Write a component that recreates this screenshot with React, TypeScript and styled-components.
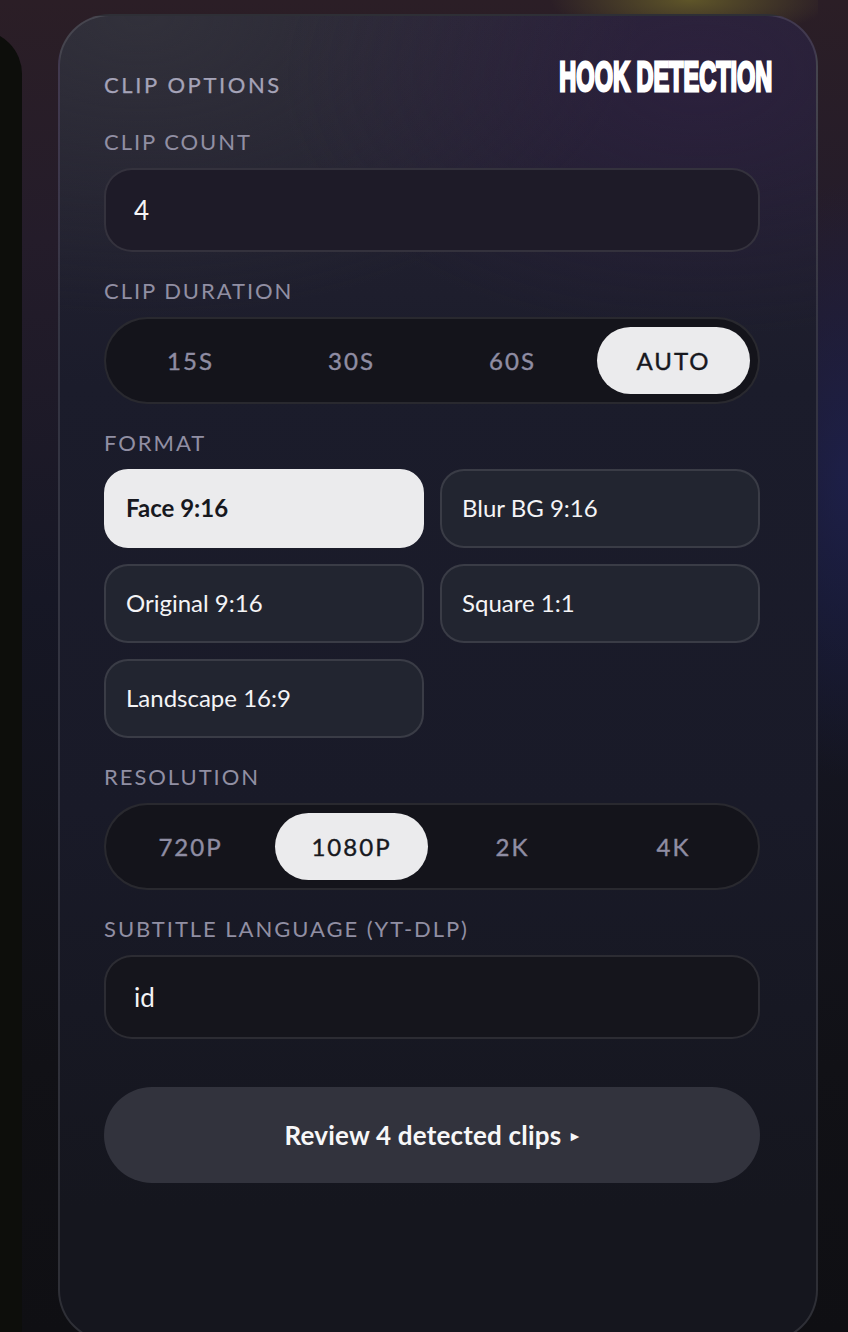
import React from 'react'
import styled, { createGlobalStyle } from 'styled-components'

const GlobalStyle = createGlobalStyle`
  html, body {
    margin: 0;
    padding: 0;
    background: #0f0f14;
  }
  * {
    box-sizing: border-box;
  }
`

const Page = styled.div`
  position: relative;
  width: 848px;
  height: 1332px;
  overflow: hidden;
  padding: 14px 0 0 58px;
  font-family: 'Lato', 'Liberation Sans', sans-serif;
  background:
    radial-gradient(120px 300px at 848px 480px, rgba(30, 34, 86, 0.7), transparent) no-repeat,
    radial-gradient(140px 40px at 690px 0, rgba(112, 104, 42, 0.75), transparent) 0 0 / 818px 100% no-repeat,
    linear-gradient(180deg, #2b1e26 0%, #241c2a 18%, #161725 45%, #111116 80%, #0f0f13 100%);
`

const SidePanel = styled.div`
  position: absolute;
  left: -120px;
  top: 30px;
  width: 142px;
  height: 1340px;
  border-radius: 0 44px 44px 0;
  background: #0d0e0b;
`

const Panel = styled.section`
  position: relative;
  width: 760px;
  height: 1328px;
  padding: 56px 56px 0 44px;
  border: 2px solid rgba(255, 255, 255, 0.11);
  border-radius: 52px;
  background:
    radial-gradient(420px 260px at 640px 60px, rgba(50, 30, 72, 0.5), transparent),
    radial-gradient(500px 300px at 80px 0, rgba(54, 54, 62, 0.7), transparent),
    linear-gradient(180deg, #272433 0%, #1b1c2b 28%, #191a28 60%, #15161e 90%);
`

const Heading = styled.div`
  height: 26px;
  margin-bottom: 31px;
  font-size: 22px;
  line-height: 26px;
  letter-spacing: 2.6px;
  color: #a5a3b8;
  -webkit-text-stroke: 0.25px #a5a3b8;
`

const Title = styled.div`
  position: absolute;
  right: 44px;
  top: 38px;
  font-family: 'Liberation Sans', sans-serif;
  font-size: 42px;
  line-height: 46px;
  font-weight: 700;
  color: #fff;
  white-space: nowrap;
  -webkit-text-stroke: 3px #fff;
  transform: scaleX(0.56);
  transform-origin: right center;
`

const Field = styled.div`
  margin-bottom: 26px;
`

const Label = styled.div`
  height: 26px;
  margin-bottom: 13px;
  font-size: 22px;
  line-height: 26px;
  letter-spacing: 1.95px;
  color: #918fa3;
`

const Input = styled.div<{ $tone: string }>`
  height: 84px;
  padding: 0 28px;
  display: flex;
  align-items: center;
  border: 2px solid rgba(255, 255, 255, 0.1);
  border-radius: 28px;
  background: ${(p) => p.$tone};
  font-size: 26px;
  color: #f4f4f6;
`

const Segment = styled.div`
  display: grid;
  grid-template-columns: repeat(4, 1fr);
  gap: 8px;
  padding: 8px;
  border: 2px solid rgba(255, 255, 255, 0.09);
  border-radius: 44px;
  background: #14141b;
`

const SegmentItem = styled.div<{ $active?: boolean }>`
  height: 67px;
  display: flex;
  align-items: center;
  justify-content: center;
  border-radius: 34px;
  font-size: 24px;
  letter-spacing: 2px;
  color: ${(p) => (p.$active ? '#17181e' : '#8f8da3')};
  -webkit-text-stroke: 0.4px ${(p) => (p.$active ? '#17181e' : '#8f8da3')};
  background: ${(p) => (p.$active ? '#ebebed' : 'transparent')};
`

const FormatGrid = styled.div`
  display: grid;
  grid-template-columns: 1fr 1fr;
  gap: 16px;
`

const FormatButton = styled.div<{ $active?: boolean }>`
  height: 79px;
  padding: 0 20px 2px;
  display: flex;
  align-items: center;
  border: 2px solid ${(p) => (p.$active ? '#ebebed' : 'rgba(255, 255, 255, 0.11)')};
  border-radius: 24px;
  font-size: 24px;
  font-weight: ${(p) => (p.$active ? 700 : 400)};
  color: ${(p) => (p.$active ? '#17181e' : '#f4f4f6')};
  background: ${(p) => (p.$active ? '#ebebed' : '#222530')};
`

const ReviewButton = styled.div`
  height: 96px;
  margin-top: 48px;
  display: flex;
  align-items: center;
  justify-content: center;
  gap: 10px;
  border-radius: 48px;
  background: #32333d;
  font-size: 26px;
  font-weight: 700;
  letter-spacing: 0.2px;
  color: #f7f7f8;
`

const Arrow = styled.span`
  font-size: 15px;
`

const durations = ['15S', '30S', '60S', 'AUTO']
const resolutions = ['720P', '1080P', '2K', '4K']
const formats = ['Face 9:16', 'Blur BG 9:16', 'Original 9:16', 'Square 1:1', 'Landscape 16:9']

const App = () => {
  return (
    <Page>
      <GlobalStyle />
      <SidePanel />
      <Panel>
        <Title>HOOK DETECTION</Title>
        <Heading>CLIP OPTIONS</Heading>

        <Field>
          <Label>CLIP COUNT</Label>
          <Input $tone="#1e1b28">4</Input>
        </Field>

        <Field>
          <Label>CLIP DURATION</Label>
          <Segment>
            {durations.map((d) => (
              <SegmentItem key={d} $active={d === 'AUTO'}>{d}</SegmentItem>
            ))}
          </Segment>
        </Field>

        <Field>
          <Label>FORMAT</Label>
          <FormatGrid>
            {formats.map((f) => (
              <FormatButton key={f} $active={f === 'Face 9:16'}>{f}</FormatButton>
            ))}
          </FormatGrid>
        </Field>

        <Field>
          <Label>RESOLUTION</Label>
          <Segment>
            {resolutions.map((r) => (
              <SegmentItem key={r} $active={r === '1080P'}>{r}</SegmentItem>
            ))}
          </Segment>
        </Field>

        <Field>
          <Label>SUBTITLE LANGUAGE (YT-DLP)</Label>
          <Input $tone="#15151c">id</Input>
        </Field>

        <ReviewButton>
          Review 4 detected clips <Arrow>▸</Arrow>
        </ReviewButton>
      </Panel>
    </Page>
  )
}

export default App
